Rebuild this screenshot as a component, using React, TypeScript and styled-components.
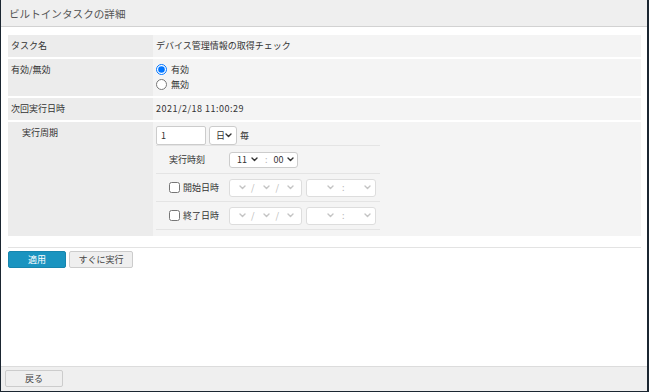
import React from "react";
import styled, { createGlobalStyle } from "styled-components";

const GlobalStyle = createGlobalStyle`
  html, body {
    margin: 0;
    padding: 0;
    background: #ffffff;
  }
  body {
    font-family: "Noto Sans CJK JP", "Liberation Sans", sans-serif;
    color: #333333;
  }
  * {
    box-sizing: border-box;
  }
`;

const Frame = styled.div`
  width: 649px;
  height: 392px;
  display: flex;
  flex-direction: column;
  background: #ffffff;
  border-left: 1px solid #1b2631;
  border-right: 2px solid #1b2631;
  border-bottom: 1px solid #1b2631;
`;

const Header = styled.header`
  height: 27px;
  flex: none;
  display: flex;
  align-items: center;
  padding-left: 8px;
  background: #efefef;
  border-bottom: 1px solid #d2d2d2;
  font-size: 10.6px;
  color: #555555;
`;

const Main = styled.main`
  flex: 1;
  padding: 8px 6px 0 7px;
`;

const DetailGrid = styled.div`
  display: grid;
  grid-template-columns: 145px 1fr;
  grid-template-rows: 22px 37px 22px 114px;
  row-gap: 2px;
  font-size: 9px;
`;

const LabelCell = styled.div<{ $indent?: number; $top?: number }>`
  background: #ececec;
  display: flex;
  align-items: ${(p) => (p.$top !== undefined ? "flex-start" : "center")};
  padding-left: ${(p) => p.$indent ?? 3}px;
  padding-top: ${(p) => p.$top ?? 0}px;
  line-height: 12px;
`;

const ValueCell = styled.div<{ $top?: number }>`
  background: #f4f4f4;
  display: flex;
  flex-direction: column;
  justify-content: ${(p) => (p.$top !== undefined ? "flex-start" : "center")};
  padding: ${(p) => p.$top ?? 0}px 3px 0 3px;
  line-height: 12px;
`;

const DateText = styled.span`
  letter-spacing: 0.5px;
`;

const RadioLine = styled.label`
  display: flex;
  align-items: center;
  height: 15px;
  gap: 4px;
  > input {
    width: 11px;
    height: 11px;
    margin: 0;
    accent-color: #0075ff;
  }
`;

const CycleTable = styled.div`
  width: 224px;
  display: flex;
  flex-direction: column;
`;

const CycleLine = styled.div`
  height: 20px;
  display: flex;
  align-items: flex-start;
  gap: 3px;
  border-bottom: 1px solid #e4e4e4;
`;

const SubRow = styled.div`
  height: 28px;
  display: grid;
  grid-template-columns: 73px auto;
  align-items: center;
  border-bottom: 1px solid #e4e4e4;
`;

const SubLabel = styled.label`
  display: flex;
  align-items: center;
  padding-left: 13px;
  gap: 3px;
  > input {
    width: 11px;
    height: 11px;
    margin: 0;
    accent-color: #0075ff;
  }
`;

const NumberInput = styled.input`
  width: 50px;
  height: 19px;
  padding: 0 4px;
  border: 1px solid #cccccc;
  border-radius: 2px;
  font: inherit;
  font-size: 9px;
  color: #333333;
  background: #ffffff;
  outline: none;
`;

const SelectBox = styled.div<{ $width: number; $height: number; $muted?: boolean }>`
  width: ${(p) => p.$width}px;
  height: ${(p) => p.$height}px;
  display: flex;
  align-items: center;
  padding: 0 4px 0 6px;
  border: 1px solid ${(p) => (p.$muted ? "#dddddd" : "#cccccc")};
  border-radius: 3px;
  background: #ffffff;
  color: ${(p) => (p.$muted ? "#bdbdbd" : "#333333")};
  font-size: 9px;
  line-height: 1;
`;

const Sep = styled.span<{ $left: number; $right: number }>`
  margin: 0 ${(p) => p.$right}px 0 ${(p) => p.$left}px;
  color: #b8b8b8;
`;

const Unit = styled.span`
  line-height: 19px;
`;

const PushRight = styled.span`
  margin-left: auto;
  display: flex;
`;

const Gap = styled.span<{ $left: number }>`
  margin-left: ${(p) => p.$left}px;
  display: flex;
`;

const FieldPair = styled.div`
  display: flex;
  gap: 4px;
`;

const ActionBar = styled.div`
  margin-top: 11px;
  padding-top: 3px;
  border-top: 1px solid #e3e3e3;
  display: flex;
  gap: 3px;
`;

const Button = styled.button<{ $primary?: boolean; $width: number }>`
  width: ${(p) => p.$width}px;
  height: 17px;
  padding: 0;
  font: inherit;
  font-size: 9px;
  border-radius: 2px;
  border: 1px solid ${(p) => (p.$primary ? "#1785ad" : "#cccccc")};
  background: ${(p) => (p.$primary ? "#1a94c0" : "#efefef")};
  color: ${(p) => (p.$primary ? "#ffffff" : "#444444")};
  cursor: pointer;
`;

const Footer = styled.footer`
  height: 25px;
  flex: none;
  display: flex;
  align-items: flex-start;
  background: #efefef;
  border-top: 1px solid #dcdcdc;
  padding: 3px 4px;
`;

const Chevron = ({ color = "#333" }: { color?: string }) => (
  <svg width="7" height="5" viewBox="0 0 7 5" style={{ display: "block", flex: "none" }}>
    <polyline points="1,1 3.5,3.5 6,1" fill="none" stroke={color} strokeWidth="1.4" strokeLinecap="round" strokeLinejoin="round" />
  </svg>
);

const DateField = () => (
  <SelectBox $width={73} $height={18} $muted style={{ paddingLeft: 9 }}>
    <Chevron color="#c4c4c4" />
    <Sep $left={5} $right={8}>/</Sep>
    <Chevron color="#c4c4c4" />
    <Sep $left={6} $right={8}>/</Sep>
    <Chevron color="#c4c4c4" />
  </SelectBox>
);

const TimeField = () => (
  <SelectBox $width={70} $height={18} $muted style={{ paddingLeft: 20 }}>
    <Chevron color="#c4c4c4" />
    <Sep $left={8} $right={0}>:</Sep>
    <PushRight>
      <Chevron color="#c4c4c4" />
    </PushRight>
  </SelectBox>
);

const App = () => {
  return (
    <>
      <GlobalStyle />
      <Frame>
        <Header>ビルトインタスクの詳細</Header>
        <Main>
          <DetailGrid>
            <LabelCell>タスク名</LabelCell>
            <ValueCell>デバイス管理情報の取得チェック</ValueCell>

            <LabelCell $top={5}>有効/無効</LabelCell>
            <ValueCell $top={3}>
              <RadioLine>
                <input type="radio" name="enabled" defaultChecked />
                有効
              </RadioLine>
              <RadioLine>
                <input type="radio" name="enabled" />
                無効
              </RadioLine>
            </ValueCell>

            <LabelCell>次回実行日時</LabelCell>
            <ValueCell>
              <DateText>2021/2/18 11:00:29</DateText>
            </ValueCell>

            <LabelCell $indent={14} $top={5}>実行周期</LabelCell>
            <ValueCell $top={4}>
              <CycleTable>
                <CycleLine>
                  <NumberInput defaultValue="1" />
                  <SelectBox $width={28} $height={19}>
                    日
                    <PushRight>
                      <Chevron />
                    </PushRight>
                  </SelectBox>
                  <Unit>毎</Unit>
                </CycleLine>
                <SubRow>
                  <SubLabel>実行時刻</SubLabel>
                  <SelectBox $width={69} $height={16} style={{ paddingLeft: 7 }}>
                    11
                    <Gap $left={4}>
                      <Chevron />
                    </Gap>
                    <Sep $left={7} $right={6}>:</Sep>
                    00
                    <Gap $left={3}>
                      <Chevron />
                    </Gap>
                  </SelectBox>
                </SubRow>
                <SubRow>
                  <SubLabel>
                    <input type="checkbox" />
                    開始日時
                  </SubLabel>
                  <FieldPair>
                    <DateField />
                    <TimeField />
                  </FieldPair>
                </SubRow>
                <SubRow>
                  <SubLabel>
                    <input type="checkbox" />
                    終了日時
                  </SubLabel>
                  <FieldPair>
                    <DateField />
                    <TimeField />
                  </FieldPair>
                </SubRow>
              </CycleTable>
            </ValueCell>
          </DetailGrid>
          <ActionBar>
            <Button $primary $width={58}>適用</Button>
            <Button $width={64}>すぐに実行</Button>
          </ActionBar>
        </Main>
        <Footer>
          <Button $width={58}>戻る</Button>
        </Footer>
      </Frame>
    </>
  );
};

export default App;
